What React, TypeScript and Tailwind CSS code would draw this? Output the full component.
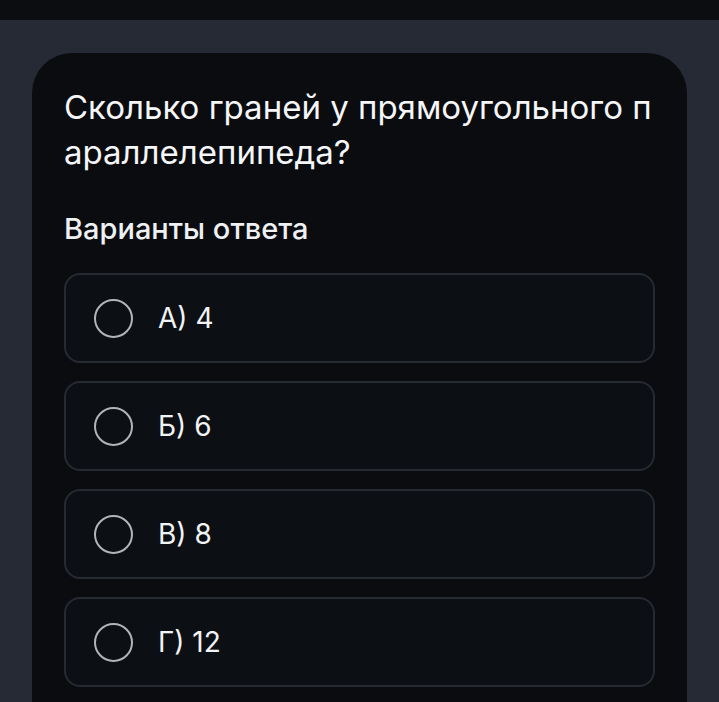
import React from 'react';

const options = ['А) 4', 'Б) 6', 'В) 8', 'Г) 12'];

const OptionRow: React.FC<{ label: string }> = ({ label }) => (
    <div className="flex h-[90px] items-center gap-[25px] rounded-2xl border-2 border-[#262a33] bg-[#0c0f14] pl-[28px]">
        <span className="block h-[39px] w-[39px] rounded-full border-[2.5px] border-[#b4b4b8]" />
        <span className="text-[28px] text-[#f2f3f5]">{label}</span>
    </div>
);

export default function App() {
    return (
        <div className="min-h-[702px] bg-[#262a34] font-['Inter','Noto_Sans',sans-serif]">
            <div className="h-5 bg-[#0b0d11]" />
            <div className="px-8 pt-[33px]">
                <div className="rounded-t-[40px] bg-[#0a0c10] px-8 pt-8 pb-10">
                    <h1 className="break-all text-[33px] leading-[45px] font-normal text-[#f5f6f7]">
                        Сколько граней у прямоугольного параллелепипеда?
                    </h1>
                    <h2 className="mt-[38px] text-[29px] leading-8 font-medium text-[#eef0f2]">Варианты ответа</h2>
                    <div className="mt-7 flex flex-col gap-[18px]">
                        {options.map((o) => (
                            <OptionRow key={o} label={o} />
                        ))}
                    </div>
                </div>
            </div>
        </div>
    );
}
